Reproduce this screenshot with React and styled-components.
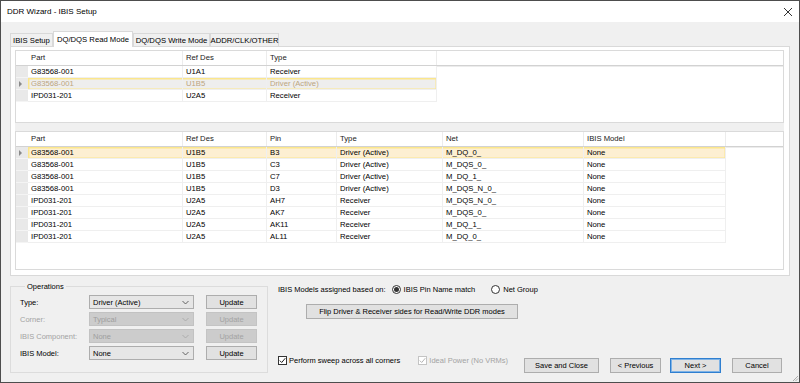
import React from "react";
import styled, { createGlobalStyle } from "styled-components";

const GlobalStyle = createGlobalStyle`
  html, body { margin: 0; padding: 0; background: #fff; }
  body {
    font-family: "Liberation Sans", Arial, sans-serif;
    font-size: 7.7px;
    color: #000;
  }
  * { box-sizing: border-box; }
`;

const Window = styled.div`
  position: relative;
  width: 800px;
  height: 383px;
  border: 1px solid #4d4d4d;
  background: #f0f0f0;
  display: flex;
  flex-direction: column;
  overflow: hidden;
`;

const TitleBar = styled.div`
  height: 21px;
  flex: none;
  background: #fff;
  display: flex;
  align-items: center;
  justify-content: space-between;
  padding: 0 6px 0 6px;
  font-size: 8px;
  color: #000;
`;

const CloseIcon = () => (
  <svg width="10" height="10" viewBox="0 0 10 10">
    <path d="M1 1 L9 9 M9 1 L1 9" stroke="#333" strokeWidth="1" />
  </svg>
);

const Body = styled.div`
  flex: 1;
  display: flex;
  flex-direction: column;
  padding: 9px 9px 9px 9px;
`;

const TabStrip = styled.div`
  display: flex;
  align-items: flex-end;
  height: 15px;
`;

const Tab = styled.div`
  position: relative;
  z-index: ${(p) => (p.$active ? 2 : 1)};
  width: ${(p) => p.$w}px;
  height: ${(p) => (p.$active ? 16 : 13)}px;
  margin-bottom: ${(p) => (p.$active ? -1 : 0)}px;
  background: ${(p) => (p.$active ? "#fff" : "#f0f0f0")};
  border: 1px solid #d9d9d9;
  border-bottom: none;
  display: flex;
  align-items: center;
  justify-content: center;
  white-space: nowrap;
  padding-top: ${(p) => (p.$active ? 0 : 1)}px;
`;

const TabPage = styled.div`
  height: 230px;
  background: #fff;
  border: 1px solid #d9d9d9;
  padding: 3px 5px 5px 4px;
  display: flex;
  flex-direction: column;
`;

const Grid = styled.div`
  height: ${(p) => p.$h}px;
  border: 1px solid #dadada;
  background: #fff;
  overflow: hidden;
`;

const Splitter = styled.div`
  height: 8px;
  background: #f0f0f0;
`;

const HeaderRow = styled.div`
  display: flex;
  height: 15px;
  border-bottom: 1px solid #d2d2d2;
  box-shadow: 0 1px 0 #ececec;
`;

const HeaderCell = styled.div`
  width: ${(p) => p.$w}px;
  flex: none;
  padding: 2px 0 0 3px;
  border-right: 1px solid #ececec;
  color: #1a1a1a;
  white-space: nowrap;
`;

const RowHeaderBlank = styled.div`
  width: 12px;
  flex: none;
`;

const DataRow = styled.div`
  position: relative;
  display: flex;
  height: 12px;
`;

const RowHeader = styled.div`
  width: 12px;
  flex: none;
  background: #e9e9e9;
  border-bottom: 1px solid #f4f4f4;
  display: flex;
  align-items: center;
  padding-left: 3px;
`;

const Pointer = styled.span`
  width: 0;
  height: 0;
  border-top: 3px solid transparent;
  border-bottom: 3px solid transparent;
  border-left: 3px solid #8a8a8a;
`;

const Cells = styled.div`
  display: flex;
  background: ${(p) => (p.$sel ? p.$selBg : "#fff")};
  color: ${(p) => (p.$sel ? p.$selColor : "#000")};
  box-shadow: ${(p) => (p.$sel ? "inset 0 0 0 1.5px #fbe68c" : "none")};
`;

const Cell = styled.div`
  width: ${(p) => p.$w}px;
  flex: none;
  height: 12px;
  line-height: 11px;
  padding-left: 3px;
  border-right: 1px solid #efefef;
  border-bottom: 1px solid #efefef;
  white-space: nowrap;
  overflow: hidden;
`;

const BottomArea = styled.div`
  flex: 1;
  display: flex;
  padding-top: 6px;
  font-size: 7.5px;
`;

const GroupBox = styled.fieldset`
  width: 258px;
  margin: 0;
  padding: 4px 0 0 9px;
  border: 1px solid #dcdcdc;
  display: flex;
  flex-direction: column;
  gap: 3px;
`;

const Legend = styled.legend`
  padding: 0 2px;
  margin-left: 5px;
  line-height: 9px;
`;

const OpRow = styled.div`
  display: flex;
  align-items: center;
  height: 14px;
`;

const OpLabel = styled.div`
  width: 69px;
  color: ${(p) => (p.$disabled ? "#a3a3a3" : "#000")};
`;

const Combo = styled.div`
  width: 105px;
  height: 14px;
  border: 1px solid ${(p) => (p.$disabled ? "#c2c2c2" : "#adadad")};
  background: ${(p) => (p.$disabled ? "#cccccc" : "#e6e6e6")};
  color: ${(p) => (p.$disabled ? "#9e9e9e" : "#000")};
  display: flex;
  align-items: center;
  justify-content: space-between;
  padding: 0 4px 0 3px;
`;

const Chevron = ({ color }) => (
  <svg width="7" height="5" viewBox="0 0 7 5">
    <polyline points="0.5,1 3.5,4 6.5,1" fill="none" stroke={color} strokeWidth="0.9" />
  </svg>
);

const Button = styled.div`
  width: ${(p) => p.$w}px;
  height: ${(p) => p.$h || 15}px;
  margin-left: ${(p) => p.$ml || 0}px;
  flex: none;
  border: 1px solid ${(p) => (p.$disabled ? "#c4c4c4" : p.$default ? "#2f7fd0" : "#adadad")};
  box-shadow: ${(p) => (p.$default ? "inset 0 0 0 1px #7fb3e6" : "none")};
  background: ${(p) => (p.$disabled ? "#cccccc" : "#e1e1e1")};
  color: ${(p) => (p.$disabled ? "#a3a3a3" : "#000")};
  display: flex;
  align-items: center;
  justify-content: center;
  white-space: nowrap;
`;

const RightPanel = styled.div`
  flex: 1;
  display: flex;
  flex-direction: column;
  padding: 2px 0 0 10px;
`;

const AssignRow = styled.div`
  display: flex;
  align-items: center;
  height: 10px;
`;

const RadioItem = styled.label`
  display: flex;
  align-items: center;
  gap: 3px;
  margin-left: ${(p) => p.$ml}px;
`;

const RadioCircle = styled.span`
  width: 9px;
  height: 9px;
  border-radius: 50%;
  border: 1px solid #333;
  background: #fff;
  display: flex;
  align-items: center;
  justify-content: center;
  &::after {
    content: "";
    width: 5px;
    height: 5px;
    border-radius: 50%;
    background: ${(p) => (p.$on ? "#333" : "transparent")};
  }
`;

const FlipRow = styled.div`
  display: flex;
  padding: 10px 0 0 28px;
`;

const FooterRow = styled.div`
  margin-top: auto;
  display: flex;
  align-items: flex-start;
`;

const CheckItem = styled.label`
  display: flex;
  align-items: center;
  gap: 2px;
  margin-left: ${(p) => p.$ml || 0}px;
  color: ${(p) => (p.$disabled ? "#a3a3a3" : "#000")};
  height: 10px;
`;

const CheckBox = styled.span`
  width: 9px;
  height: 9px;
  border: 1px solid ${(p) => (p.$disabled ? "#c4c4c4" : "#333")};
  background: #fff;
  display: flex;
  align-items: center;
  justify-content: center;
`;

const Tick = ({ color }) => (
  <svg width="7" height="7" viewBox="0 0 7 7">
    <polyline points="0.8,3.6 2.7,5.5 6.3,1.2" fill="none" stroke={color} strokeWidth="1" />
  </svg>
);

const Buttons = styled.div`
  margin-left: auto;
  margin-right: 8px;
  display: flex;
  padding-top: 3px;
`;

const Grip = styled.div`
  position: absolute;
  right: 0;
  bottom: 0;
  width: 8px;
  height: 8px;
`;

const topCols = [
  { label: "Part", w: 155 },
  { label: "Ref Des", w: 84 },
  { label: "Type", w: 170 },
];

const topRows = [
  ["G83568-001", "U1A1", "Receiver"],
  ["G83568-001", "U1B5", "Driver (Active)"],
  ["IPD031-201", "U2A5", "Receiver"],
];

const pinCols = [
  { label: "Part", w: 155 },
  { label: "Ref Des", w: 84 },
  { label: "Pin", w: 70 },
  { label: "Type", w: 106 },
  { label: "Net", w: 141 },
  { label: "IBIS Model", w: 142 },
];

const pinRows = [
  ["G83568-001", "U1B5", "B3", "Driver (Active)", "M_DQ_0_", "None"],
  ["G83568-001", "U1B5", "C3", "Driver (Active)", "M_DQS_0_", "None"],
  ["G83568-001", "U1B5", "C7", "Driver (Active)", "M_DQ_1_", "None"],
  ["G83568-001", "U1B5", "D3", "Driver (Active)", "M_DQS_N_0_", "None"],
  ["IPD031-201", "U2A5", "AH7", "Receiver", "M_DQS_N_0_", "None"],
  ["IPD031-201", "U2A5", "AK7", "Receiver", "M_DQS_0_", "None"],
  ["IPD031-201", "U2A5", "AK11", "Receiver", "M_DQ_1_", "None"],
  ["IPD031-201", "U2A5", "AL11", "Receiver", "M_DQ_0_", "None"],
];

const DataGrid = ({ h, cols, rows, selected, selBg, selColor }) => (
  <Grid $h={h}>
    <HeaderRow>
      <RowHeaderBlank />
      {cols.map((c) => (
        <HeaderCell key={c.label} $w={c.w}>{c.label}</HeaderCell>
      ))}
    </HeaderRow>
    {rows.map((r, i) => (
      <DataRow key={i}>
        <RowHeader>{i === selected && <Pointer />}</RowHeader>
        <Cells $sel={i === selected} $selBg={selBg} $selColor={selColor}>
          {r.map((v, j) => (
            <Cell key={j} $w={cols[j].w}>{v}</Cell>
          ))}
        </Cells>
      </DataRow>
    ))}
  </Grid>
);

const ops = [
  { label: "Type:", value: "Driver (Active)" },
  { label: "Corner:", value: "Typical", disabled: true },
  { label: "IBIS Component:", value: "None", disabled: true },
  { label: "IBIS Model:", value: "None" },
];

export default function App() {
  return (
    <>
      <GlobalStyle />
      <Window>
        <TitleBar>
          <span>DDR Wizard - IBIS Setup</span>
          <CloseIcon />
        </TitleBar>
        <Body>
          <TabStrip>
            <Tab $w={43}>IBIS Setup</Tab>
            <Tab $w={80} $active>DQ/DQS Read Mode</Tab>
            <Tab $w={77}>DQ/DQS Write Mode</Tab>
            <Tab $w={69}>ADDR/CLK/OTHER</Tab>
          </TabStrip>
          <TabPage>
            <DataGrid h={73} cols={topCols} rows={topRows} selected={1} selBg="#eeeeee" selColor="#bca57f" />
            <Splitter />
            <DataGrid h={139} cols={pinCols} rows={pinRows} selected={0} selBg="#fdefd2" selColor="#000" />
          </TabPage>
          <BottomArea>
            <GroupBox>
              <Legend>Operations</Legend>
              {ops.map((o) => (
                <OpRow key={o.label}>
                  <OpLabel $disabled={o.disabled}>{o.label}</OpLabel>
                  <Combo $disabled={o.disabled}>
                    <span>{o.value}</span>
                    <Chevron color={o.disabled ? "#a8a8a8" : "#555"} />
                  </Combo>
                  <Button $w={51} $h={14} $ml={12} $disabled={o.disabled}>Update</Button>
                </OpRow>
              ))}
            </GroupBox>
            <RightPanel>
              <AssignRow>
                <span>IBIS Models assigned based on:</span>
                <RadioItem $ml={6}>
                  <RadioCircle $on />
                  IBIS Pin Name match
                </RadioItem>
                <RadioItem $ml={16}>
                  <RadioCircle />
                  Net Group
                </RadioItem>
              </AssignRow>
              <FlipRow>
                <Button $w={212}>Flip Driver &amp; Receiver sides for Read/Write DDR modes</Button>
              </FlipRow>
              <FooterRow>
                <CheckItem>
                  <CheckBox><Tick color="#222" /></CheckBox>
                  Perform sweep across all corners
                </CheckItem>
                <CheckItem $ml={18} $disabled>
                  <CheckBox $disabled><Tick color="#b5b5b5" /></CheckBox>
                  Ideal Power (No VRMs)
                </CheckItem>
                <Buttons>
                  <Button $w={75}>Save and Close</Button>
                  <Button $w={51} $ml={11}>&lt; Previous</Button>
                  <Button $w={51} $ml={9} $default>Next &gt;</Button>
                  <Button $w={50} $ml={11}>Cancel</Button>
                </Buttons>
              </FooterRow>
            </RightPanel>
          </BottomArea>
        </Body>
        <Grip>
          <svg width="8" height="8" viewBox="0 0 8 8">
            <path d="M7 2 L2 7 M7 4.5 L4.5 7" stroke="#9a9a9a" strokeWidth="0.8" />
          </svg>
        </Grip>
      </Window>
    </>
  );
}
